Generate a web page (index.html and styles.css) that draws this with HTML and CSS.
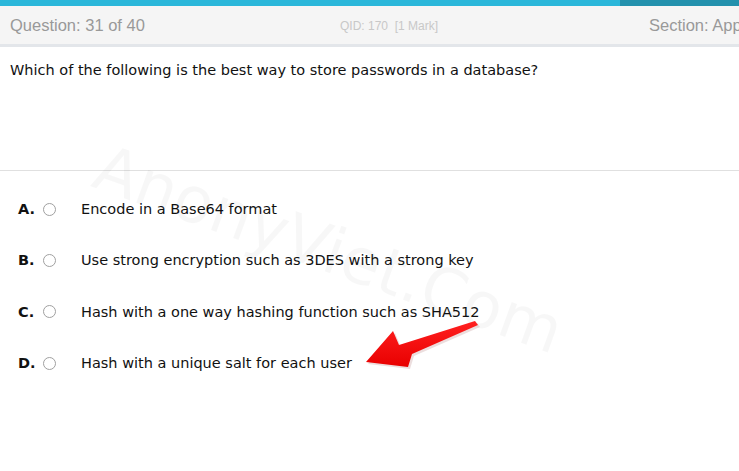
FILE: index.html
```html
<!DOCTYPE html>
<html>
<head>
<meta charset="utf-8">
<link rel="stylesheet" href="styles.css">
</head>
<body>
<div class="topbar"><div class="progress"></div><div class="rest"></div></div>
<div class="header">
  <div class="qnum">Question: 31 of 40</div>
  <div class="qid">QID: 170&nbsp; [1 Mark]</div>
  <div class="section">Section: App</div>
</div>
<div class="question">Which of the following is the best way to store passwords in a database?</div>
<div class="options">
  <div class="opt"><span class="letter">A.</span><span class="radio"></span><span class="text">Encode in a Base64 format</span></div>
  <div class="opt"><span class="letter">B.</span><span class="radio"></span><span class="text">Use strong encryption such as 3DES with a strong key</span></div>
  <div class="opt"><span class="letter">C.</span><span class="radio"></span><span class="text">Hash with a one way hashing function such as SHA512</span></div>
  <div class="opt"><span class="letter">D.</span><span class="radio"></span><span class="text">Hash with a unique salt for each user</span></div>
</div>
<div class="watermark">AnonyViet.Com</div>
<svg class="arrow" width="739" height="471" viewBox="0 0 739 471">
  <defs>
    <linearGradient id="g" x1="0" y1="0" x2="0" y2="1">
      <stop offset="0" stop-color="#ff2020"/>
      <stop offset="1" stop-color="#e80000"/>
    </linearGradient>
  </defs>
  <polygon points="366,362 393,331 399,345 475,321 478,325 412,354 408,367" fill="#c9a0a0" opacity="0.35" transform="translate(2,2)"/>
  <polygon points="366,362 393,331 399,345 475,321 478,325 412,354 408,367" fill="url(#g)"/>
</svg>
</body>
</html>
```
FILE: styles.css
```css
html, body { margin: 0; padding: 0; background: #fff; }
body { width: 739px; height: 471px; overflow: hidden; position: relative; font-family: "DejaVu Sans", Verdana, sans-serif; }
.topbar { display: flex; height: 6px; }
.progress { width: 620px; background: #2bb7da; }
.rest { flex: 1; background: #2391ad; }
.header { display: flex; align-items: center; height: 41px; padding-top: 1px; box-sizing: border-box; background: #f5f5f5; border-bottom: 3px solid #e3e6ea; font-family: "Liberation Sans", Arial, sans-serif; white-space: nowrap; overflow: hidden; }
.qnum { font-size: 16.5px; color: #999; padding-left: 10px; width: 330px; flex: none; }
.qid { font-size: 12px; color: #c8c8c8; width: 309px; flex: none; }
.section { font-size: 16.5px; color: #999; flex: none; }
.question { font-size: 14.5px; color: #111; padding: 15px 10px 0; height: 108px; border-bottom: 1px solid #e0e0e0; }
.options { display: flex; flex-direction: column; padding-top: 29px; gap: 33.4px; }
.opt { display: flex; align-items: center; height: 18px; font-size: 14.5px; color: #111; }
.letter { font-weight: bold; width: 26px; padding-left: 18px; flex: none; }
.radio { width: 11px; height: 11px; border: 1px solid #a0a0a0; border-radius: 50%; flex: none; margin-left: -1px; }
.text { padding-left: 25px; }
.watermark { position: absolute; left: 108px; top: 135px; font-family: "DejaVu Sans", sans-serif; font-size: 64px; line-height: 1; color: rgba(0,0,0,0.03); transform: rotate(20deg); transform-origin: left top; white-space: nowrap; pointer-events: none; }
.arrow { position: absolute; left: 0; top: 0; pointer-events: none; }
```
